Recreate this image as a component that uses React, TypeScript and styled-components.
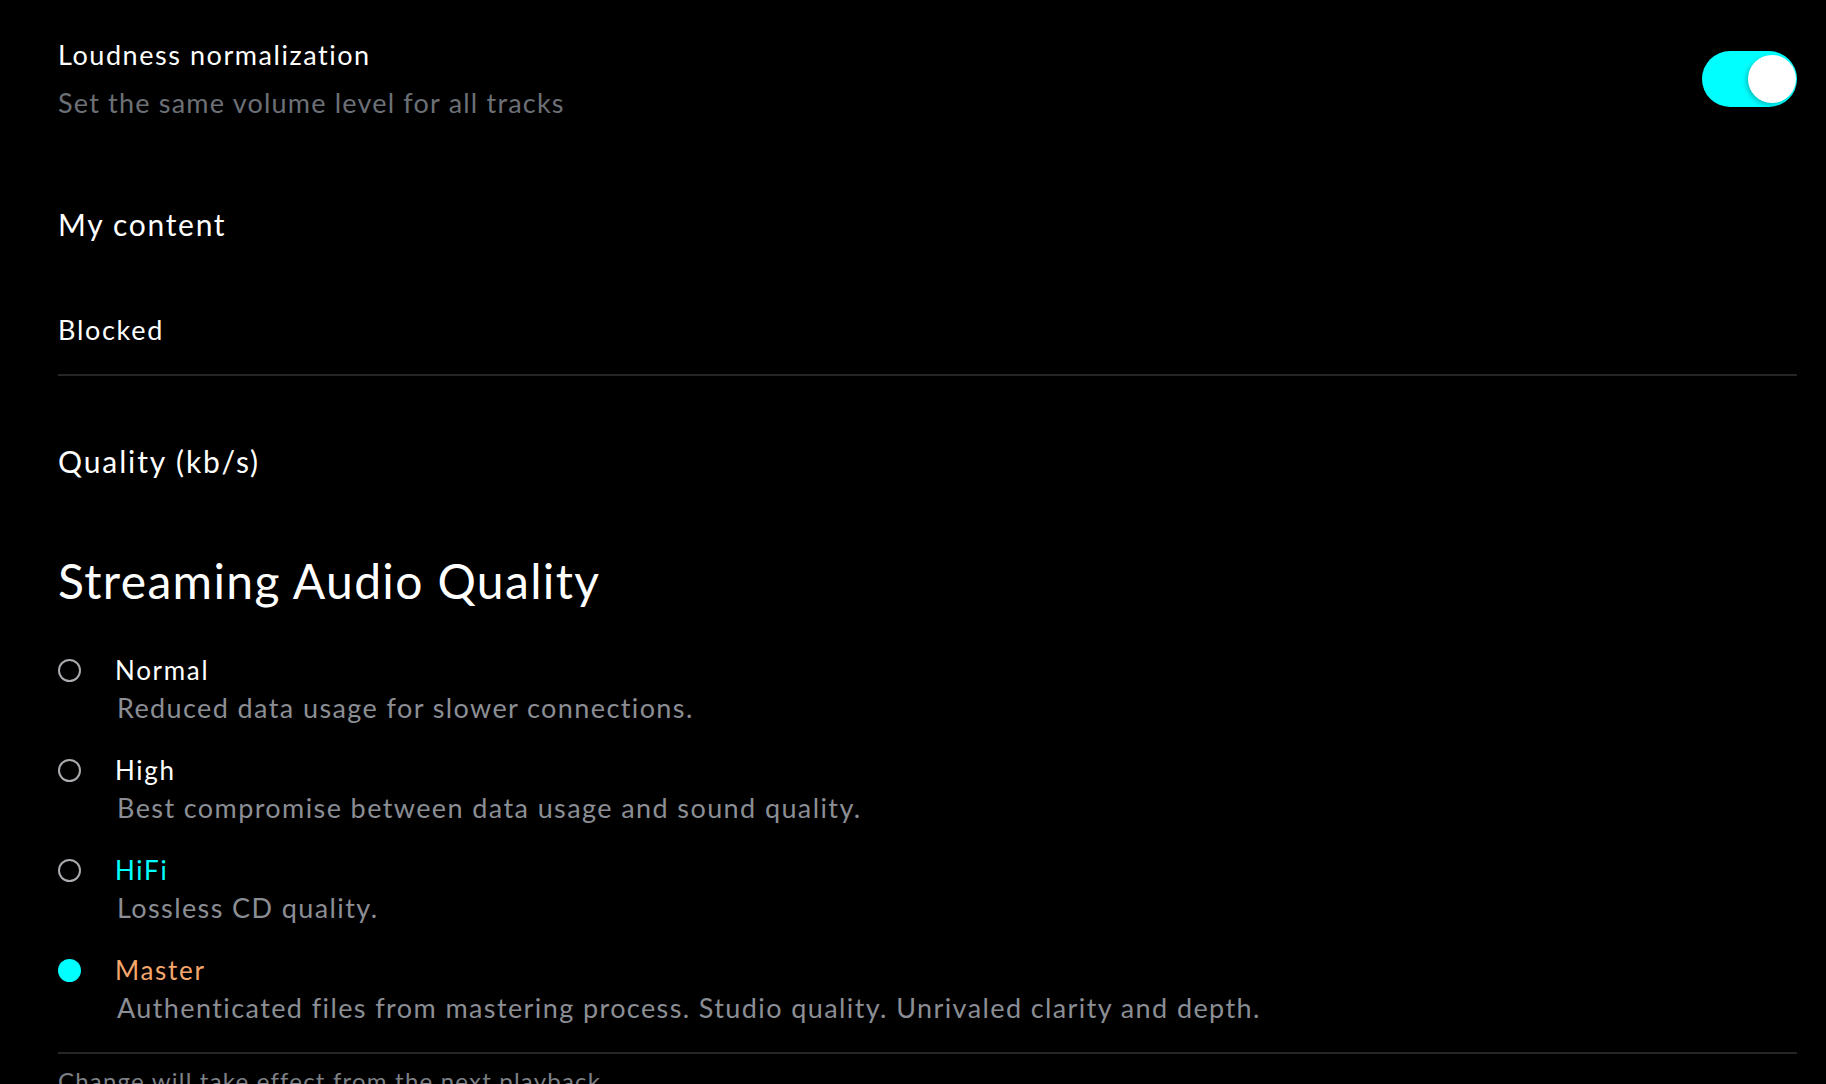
import React from "react";
import styled, { createGlobalStyle } from "styled-components";

const GlobalStyle = createGlobalStyle`
  html, body {
    margin: 0;
    padding: 0;
    background-color: #000;
  }
  body {
    font-family: Lato, "Open Sans", sans-serif;
    color: #fff;
    overflow: hidden;
  }
`;

type Quality = {
  id: string;
  label: string;
  description: string;
  color: string;
};

const qualities: Quality[] = [
  {
    id: "normal",
    label: "Normal",
    description: "Reduced data usage for slower connections.",
    color: "#ffffff",
  },
  {
    id: "high",
    label: "High",
    description: "Best compromise between data usage and sound quality.",
    color: "#ffffff",
  },
  {
    id: "hifi",
    label: "HiFi",
    description: "Lossless CD quality.",
    color: "#00ffff",
  },
  {
    id: "master",
    label: "Master",
    description:
      "Authenticated files from mastering process. Studio quality. Unrivaled clarity and depth.",
    color: "#f5a66b",
  },
];

const App = () => {
  const selected = "master";
  return (
    <>
      <GlobalStyle />
      <Page>
        <SettingRow>
          <SettingText>
            <SettingTitle>Loudness normalization</SettingTitle>
            <SettingSub>Set the same volume level for all tracks</SettingSub>
          </SettingText>
          <Toggle role="switch" aria-checked="true">
            <Knob />
          </Toggle>
        </SettingRow>

        <SectionLink>My content</SectionLink>
        <BlockedRow>Blocked</BlockedRow>

        <QualityLabel>Quality (kb/s)</QualityLabel>
        <Heading>Streaming Audio Quality</Heading>

        <RadioList>
          {qualities.map((q) => (
            <RadioItem key={q.id}>
              <RadioCol>
                <Radio $checked={q.id === selected} />
              </RadioCol>
              <RadioText>
                <RadioLabel $color={q.color}>{q.label}</RadioLabel>
                <RadioDesc>{q.description}</RadioDesc>
              </RadioText>
            </RadioItem>
          ))}
        </RadioList>

        <Footer>Change will take effect from the next playback</Footer>
      </Page>
    </>
  );
};

export default App;

const Page = styled.div`
  padding: 35px 29px 0 58px;
  display: flex;
  flex-direction: column;
  height: 1084px;
  box-sizing: border-box;
`;

const SettingRow = styled.div`
  display: flex;
  align-items: center;
  justify-content: space-between;
`;

const SettingText = styled.div`
  display: flex;
  flex-direction: column;
`;

const SettingTitle = styled.div`
  font-size: 27px;
  line-height: 40px;
  letter-spacing: 1.55px;
  color: #fff;
`;

const SettingSub = styled.div`
  font-size: 27px;
  line-height: 40px;
  letter-spacing: 1.2px;
  margin-top: 8px;
  color: #6c7076;
`;

const Toggle = styled.div`
  position: relative;
  width: 95px;
  height: 56px;
  border-radius: 28px;
  background-color: #00ffff;
  cursor: pointer;
`;

const Knob = styled.div`
  position: absolute;
  top: 4px;
  right: 1px;
  width: 48px;
  height: 48px;
  border-radius: 50%;
  background-color: #fff;
  box-shadow: -2px 2px 4px rgba(0, 90, 90, 0.35);
`;

const SectionLink = styled.div`
  font-size: 30px;
  line-height: 40px;
  letter-spacing: 1.7px;
  margin-top: 81px;
  cursor: pointer;
`;

const BlockedRow = styled.div`
  font-size: 27px;
  line-height: 40px;
  letter-spacing: 1.7px;
  margin-top: 66px;
  padding-bottom: 24px;
  border-bottom: 2px solid #262626;
  cursor: pointer;
`;

const QualityLabel = styled.div`
  font-size: 30px;
  line-height: 40px;
  letter-spacing: 1.9px;
  margin-top: 65px;
`;

const Heading = styled.h2`
  font-size: 48px;
  line-height: 60px;
  font-weight: 400;
  letter-spacing: 1.35px;
  margin: 70px 0 0;
`;

const RadioList = styled.div`
  display: flex;
  flex-direction: column;
  gap: 24px;
  margin-top: 40px;
  padding-bottom: 25px;
  border-bottom: 2px solid #262626;
`;

const RadioItem = styled.div`
  display: flex;
  cursor: pointer;
`;

const RadioCol = styled.div`
  width: 57px;
  height: 38px;
  display: flex;
  align-items: center;
`;

const Radio = styled.div<{ $checked: boolean }>`
  width: 23px;
  height: 23px;
  box-sizing: border-box;
  border-radius: 50%;
  border: ${(p) => (p.$checked ? "none" : "2px solid #a9abae")};
  background-color: ${(p) => (p.$checked ? "#00ffff" : "transparent")};
`;

const RadioText = styled.div`
  display: flex;
  flex-direction: column;
`;

const RadioLabel = styled.div<{ $color: string }>`
  font-size: 26px;
  line-height: 38px;
  letter-spacing: 1.7px;
  color: ${(p) => p.$color};
`;

const RadioDesc = styled.div`
  font-size: 27px;
  line-height: 38px;
  letter-spacing: 1.4px;
  padding-left: 2px;
  color: #8b8e94;
`;

const Footer = styled.div`
  font-size: 24px;
  line-height: 32px;
  letter-spacing: 1.2px;
  margin-top: 11px;
  color: #7d8086;
`;
